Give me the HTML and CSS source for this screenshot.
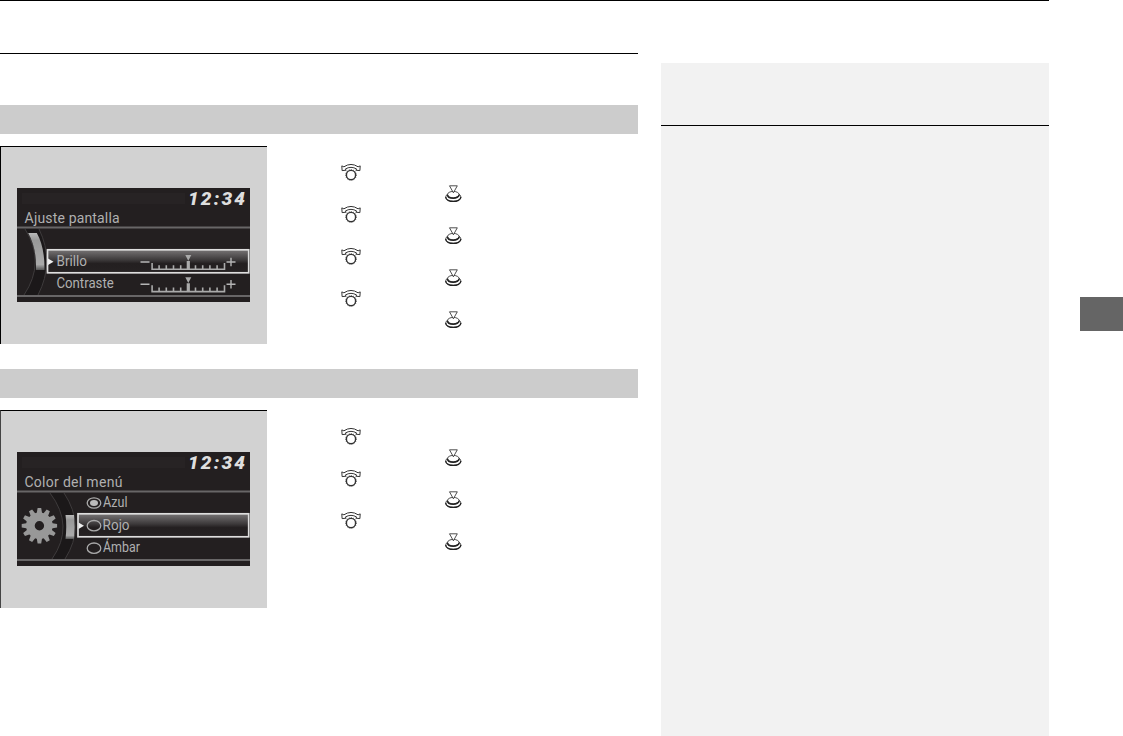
FILE: index.html
```html
<!DOCTYPE html>
<html lang="es">
<head>
<meta charset="utf-8">
<title>Ajuste pantalla</title>
<link rel="stylesheet" href="styles.css">
</head>
<body>
<svg class="defs" width="0" height="0" aria-hidden="true">
  <defs>
    <linearGradient id="glass" x1="0" y1="0" x2="0" y2="1">
      <stop offset="0" stop-color="#777475"/><stop offset=".45" stop-color="#3b3839"/><stop offset=".6" stop-color="#231f20"/><stop offset="1" stop-color="#262223"/>
    </linearGradient>
    <linearGradient id="lit" x1="0" y1="0" x2="0" y2="1">
      <stop offset="0" stop-color="#b9b9b9"/><stop offset=".2" stop-color="#989898"/><stop offset=".85" stop-color="#aaa"/><stop offset="1" stop-color="#555"/>
    </linearGradient>
    <symbol id="turn" viewBox="0 0 20 17">
      <g fill="none" stroke="#333" stroke-width="1">
        <path d="M.8 1.9 L2.9 2.8 Q10 -1.9 17.1 2.8 L19.2 1.9 L18.9 6.6 L14.8 6.2 L15.7 5 Q10 1.7 4.3 5 L5.2 6.2 L1.1 6.6 Z"/>
        <circle cx="10" cy="11" r="4.6" stroke-width="1.4"/>
        <circle cx="10" cy="11" r="5.3" stroke-width=".9" stroke-dasharray="1 1.2"/>
      </g>
    </symbol>
    <symbol id="push" viewBox="0 0 17 18">
      <g fill="none" stroke="#222" stroke-width=".8">
        <ellipse cx="8.3" cy="12" rx="7.6" ry="4.3" fill="#fff"/>
        <path d="M.7 12 C.7 17.9 15.9 17.9 15.9 12" stroke-width="1.3"/>
        <ellipse cx="8.3" cy="9.6" rx="5.8" ry="3.2" fill="#fff"/>
        <path d="M2.5 9.8 C2.5 14.3 14.1 14.3 14.1 9.8" stroke-width="1.6"/>
        <path d="M4.5 .8 H12.3 L8.4 7.8 Z" fill="#fff"/>
      </g>
    </symbol>
    <symbol id="scale" viewBox="0 0 100 18">
      <path d="M1 8H10M87 8H96M91.5 3.8V12.2" stroke="#b5b5b5" stroke-width="1.4"/>
      <path d="M12.6 9V15.3H85V9M19.6 11.2V15M26.8 11.2V15M34 11.2V15M41.2 11.2V15M56 11.2V15M63.2 11.2V15M70.4 11.2V15M77.6 11.2V15" fill="none" stroke="#aaa" stroke-width="1.6"/>
      <path d="M48.8 7V15.5" stroke="#aaa" stroke-width="3.2"/>
      <path d="M45.8 1H51.8L48.8 6.8Z" fill="#aaa"/>
    </symbol>
    <symbol id="frame" viewBox="0 0 233 114">
      <path d="M0 0H233V114H0Z" fill="#231f20"/>
      <path d="M5 5H168V16H5Z" fill="#272324"/>
      <path d="M0 39.4H233M0 108H233" stroke="#686667" stroke-width="2"/>
    </symbol>
  </defs>
</svg>
<div class="page">
  <main class="content">
    <div class="rule"></div>
    <section class="block">
      <div class="heading"></div>
      <div class="row">
        <div class="figure">
          <svg class="screen" viewBox="0 0 233 114">
            <use href="#frame" width="233" height="114"/>
            <text class="clock" x="171" y="17.4" textLength="57" lengthAdjust="spacing">12:34</text>
            <text class="label" x="7.6" y="34.6" textLength="95" lengthAdjust="spacing">Ajuste pantalla</text>
            <path d="M8 41H22Q38 74 21 107H7Q29 74 8 41Z" fill="#1b1819"/>
            <path d="M8 41Q29 74 7 107M22 41Q38 74 21 107" fill="none" stroke="#3e3b3c"/>
            <path d="M11.2 45H19.8Q27.8 59 27.5 82H18.9Q20 61 11.2 45Z" fill="url(#lit)"/>
            <rect x="30.5" y="61.8" width="201.2" height="23" fill="url(#glass)" stroke="#dedede" stroke-width="1.7"/>
            <path d="M31 70.5L36.5 73.8L31 77.1Z" fill="#eee"/>
            <text class="label" x="39.6" y="78" textLength="30.4" lengthAdjust="spacingAndGlyphs">Brillo</text>
            <text class="label" x="39.4" y="100.3" textLength="57.4" lengthAdjust="spacingAndGlyphs">Contraste</text>
            <use href="#scale" x="122.5" y="66" width="100" height="18"/>
            <use href="#scale" x="122.5" y="88.3" width="100" height="18"/>
          </svg>
        </div>
        <div class="steps">
          <svg class="turn"><use href="#turn"/></svg><svg class="push"><use href="#push"/></svg>
          <svg class="turn"><use href="#turn"/></svg><svg class="push"><use href="#push"/></svg>
          <svg class="turn"><use href="#turn"/></svg><svg class="push"><use href="#push"/></svg>
          <svg class="turn"><use href="#turn"/></svg><svg class="push"><use href="#push"/></svg>
        </div>
      </div>
    </section>
    <section class="block">
      <div class="heading"></div>
      <div class="row">
        <div class="figure figure-soft">
          <svg class="screen" viewBox="0 0 233 114">
            <use href="#frame" width="233" height="114"/>
            <text class="clock" x="171" y="17.4" textLength="57" lengthAdjust="spacing">12:34</text>
            <text class="label" x="7.4" y="34.6" textLength="98" lengthAdjust="spacing">Color del menú</text>
            <path d="M33 41H47Q69 74 48 107H35Q58 74 33 41Z" fill="#1b1819"/>
            <path d="M33 41Q58 74 35 107M47 41Q69 74 48 107" fill="none" stroke="#3e3b3c"/>
            <path d="M48.5 63H57Q58.3 74 57 87H48.5Q50 74 48.5 63Z" fill="url(#lit)"/>
            <circle cx="22.4" cy="73.7" r="9" fill="none" stroke="#989898" stroke-width="8.6"/>
            <path d="M20.6 56h3.6l1 6h-5.6zM20.6 91.4h3.6l1-6h-5.6z" fill="#989898"/>
            <path d="M20.6 56h3.6l1 6h-5.6zM20.6 91.4h3.6l1-6h-5.6z" fill="#989898" transform="rotate(30 22.4 73.7)"/>
            <path d="M20.6 56h3.6l1 6h-5.6zM20.6 91.4h3.6l1-6h-5.6z" fill="#989898" transform="rotate(60 22.4 73.7)"/>
            <path d="M20.6 56h3.6l1 6h-5.6zM20.6 91.4h3.6l1-6h-5.6z" fill="#989898" transform="rotate(90 22.4 73.7)"/>
            <path d="M20.6 56h3.6l1 6h-5.6zM20.6 91.4h3.6l1-6h-5.6z" fill="#989898" transform="rotate(120 22.4 73.7)"/>
            <path d="M20.6 56h3.6l1 6h-5.6zM20.6 91.4h3.6l1-6h-5.6z" fill="#989898" transform="rotate(150 22.4 73.7)"/>
            <rect x="61" y="61.8" width="170.7" height="23" fill="url(#glass)" stroke="#dedede" stroke-width="1.7"/>
            <path d="M61.5 70.5L67 73.8L61.5 77.1Z" fill="#eee"/>
            <g fill="none" stroke="#aaa" stroke-width="1.3">
              <ellipse cx="77" cy="51" rx="6.8" ry="5.2"/><ellipse cx="77" cy="73.7" rx="6.8" ry="5.2"/><ellipse cx="77" cy="96.2" rx="6.8" ry="5.2"/>
            </g>
            <ellipse cx="77" cy="51" rx="4" ry="3" fill="#bbb"/>
            <text class="label" x="86" y="55.2" textLength="24.5" lengthAdjust="spacingAndGlyphs">Azul</text>
            <text class="label" x="85.6" y="78" textLength="27" lengthAdjust="spacingAndGlyphs">Rojo</text>
            <text class="label" x="86" y="100.3" textLength="37" lengthAdjust="spacingAndGlyphs">Ámbar</text>
          </svg>
        </div>
        <div class="steps">
          <svg class="turn"><use href="#turn"/></svg><svg class="push"><use href="#push"/></svg>
          <svg class="turn"><use href="#turn"/></svg><svg class="push"><use href="#push"/></svg>
          <svg class="turn"><use href="#turn"/></svg><svg class="push"><use href="#push"/></svg>
        </div>
      </div>
    </section>
  </main>
  <aside class="notes"><div class="notes-head"></div></aside>
  <div class="tab"></div>
</div>
</body>
</html>
```

FILE: styles.css
```css
* { box-sizing: border-box; }
body { margin: 0; background: #fff; font-family: Roboto, "Liberation Sans", sans-serif; overflow: hidden; }
.defs { display: block; }
.page {
  display: grid;
  grid-template-columns: 638px 388px 1fr;
  column-gap: 23px;
  width: 1123px;
  height: 736px;
  background: linear-gradient(#000, #000) 0 0 / 1049px 1px no-repeat;
}
.content { padding-top: 53px; }
.rule { height: 1px; background: #000; margin-bottom: 51px; }
.block { margin-bottom: 25px; }
.heading { height: 29px; background: #ccc; margin-bottom: 12px; }
.row { display: flex; }
.figure {
  width: 267px;
  height: 198px;
  padding: 41px 0 0 16px;
  background: #d2d2d2;
  border-top: 1px solid #000;
  border-left: 1px solid #000;
}
.figure-soft { border-left-color: #444; }
.screen { display: block; width: 233px; height: 114px; }
.label { font: 14px Roboto, sans-serif; fill: #b0b0b0; }
.clock { font: italic 900 19px Roboto, sans-serif; fill: #dedede; }
.steps {
  display: flex;
  flex-direction: column;
  gap: 4px;
  padding: 18px 0 0 74px;
}
.steps svg { display: block; }
.turn { width: 20px; height: 17px; }
.push { width: 17px; height: 18px; margin: 0 0 -1px 104px; }
.notes { margin-top: 63px; background: #f2f2f2; }
.notes-head { height: 63px; border-bottom: 1px solid #000; }
.tab { width: 43px; height: 34px; margin-top: 297px; justify-self: end; background: #656565; }
```
